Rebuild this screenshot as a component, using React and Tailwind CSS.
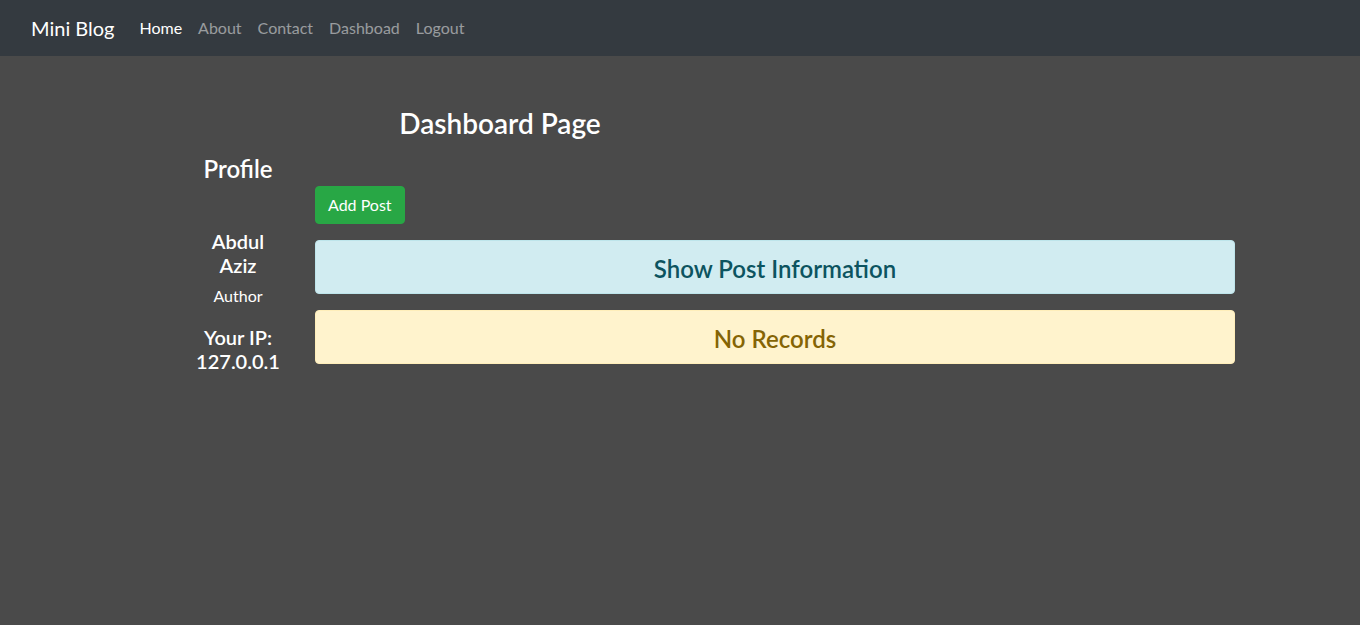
export default function App() {
  const links = ["About", "Contact", "Dashboad", "Logout"];

  return (
    <div className="min-h-[625px] bg-[#4a4a4a] font-['Segoe_UI','Lato','Noto_Sans',sans-serif] text-white">
      {/* navbar */}
      <nav className="flex h-14 items-center bg-[#343a40] pl-[31px]">
        <span className="text-[20px] leading-[30px]">Mini Blog</span>
        <div className="ml-[17px] flex items-center text-[16px]">
          <a className="px-2 text-white">Home</a>
          {links.map((l) => (
            <a key={l} className="px-2 text-white/50">
              {l}
            </a>
          ))}
        </div>
      </nav>

      <div className="mx-auto w-[1110px]">
        <div className="mt-[50px] w-[750px] text-center">
          <h3 className="text-[28px] font-semibold leading-[34px]">Dashboard Page</h3>
        </div>

        <div className="flex">
          {/* profile column */}
          <div className="w-[190px] pr-[34px]">
            <div className="ml-auto w-[86px] pt-[14px] text-center">
              <h4 className="text-[24px] font-semibold leading-[29px]">Profile</h4>
              <h5 className="mt-[46px] text-[20px] font-semibold leading-[24px]">Abdul Aziz</h5>
              <p className="mt-[7px] text-[16px] leading-[24px]">Author</p>
              <h5 className="mt-[17px] text-[20px] font-semibold leading-[24px]">
                Your IP: 127.0.0.1
              </h5>
            </div>
          </div>

          {/* posts column */}
          <div className="flex-1 pt-[46px]">
            <button className="h-[38px] rounded border border-[#28a745] bg-[#28a745] px-3 text-[16px] text-white">
              Add Post
            </button>
            <div className="mt-4 flex h-[54px] items-center justify-center rounded border border-[#bee5eb] bg-[#d1ecf1] pt-[3px]">
              <h4 className="text-[24px] font-semibold text-[#0c5460]">Show Post Information</h4>
            </div>
            <div className="mt-4 flex h-[54px] items-center justify-center rounded border border-[#ffeeba] bg-[#fff3cd] pt-[3px]">
              <h4 className="text-[24px] font-semibold text-[#856404]">No Records</h4>
            </div>
          </div>
        </div>
      </div>
    </div>
  );
}
